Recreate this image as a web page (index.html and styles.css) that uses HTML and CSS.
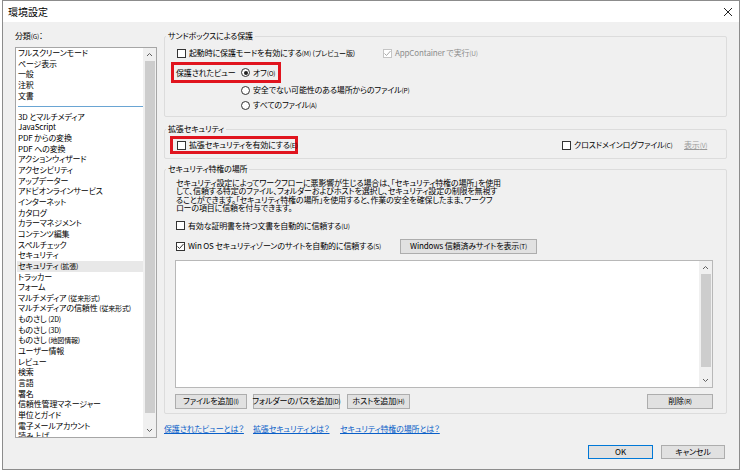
FILE: index.html
```html
<!DOCTYPE html>
<html lang="ja">
<head>
<meta charset="utf-8">
<title>環境設定</title>
<link rel="stylesheet" href="styles.css">
</head>
<body>
<div class="window">
  <div class="titlebar">
    <span class="title">環境設定</span>
    <svg class="close" width="10" height="10" viewBox="0 0 10 10"><path d="M1 1 L9 9 M9 1 L1 9" stroke="#222" stroke-width="1" fill="none"/></svg>
  </div>
  <div class="main">
    <div class="left">
      <div class="cat-label">分類<span class="mn">(G)</span>：</div>
      <div class="listbox">
        <div class="items">
          <div class="item">フルスクリーンモード</div>
          <div class="item">ページ表示</div>
          <div class="item">一般</div>
          <div class="item">注釈</div>
          <div class="item">文書</div>
          <div class="sep"></div>
          <div class="item">3D とマルチメディア</div>
          <div class="item">JavaScript</div>
          <div class="item">PDF からの変換</div>
          <div class="item">PDF への変換</div>
          <div class="item">アクションウィザード</div>
          <div class="item">アクセシビリティ</div>
          <div class="item">アップデーター</div>
          <div class="item">アドビオンラインサービス</div>
          <div class="item">インターネット</div>
          <div class="item">カタログ</div>
          <div class="item">カラーマネジメント</div>
          <div class="item">コンテンツ編集</div>
          <div class="item">スペルチェック</div>
          <div class="item">セキュリティ</div>
          <div class="item sel">セキュリティ <span class="paren">(拡張)</span></div>
          <div class="item">トラッカー</div>
          <div class="item">フォーム</div>
          <div class="item">マルチメディア <span class="paren">(従来形式)</span></div>
          <div class="item">マルチメディアの信頼性 <span class="paren">(従来形式)</span></div>
          <div class="item">ものさし <span class="paren">(2D)</span></div>
          <div class="item">ものさし <span class="paren">(3D)</span></div>
          <div class="item">ものさし <span class="paren">(地図情報)</span></div>
          <div class="item">ユーザー情報</div>
          <div class="item">レビュー</div>
          <div class="item">検索</div>
          <div class="item">言語</div>
          <div class="item">署名</div>
          <div class="item">信頼性管理マネージャー</div>
          <div class="item">単位とガイド</div>
          <div class="item">電子メールアカウント</div>
          <div class="item">読み上げ</div>
        </div>
        <div class="vscroll">
          <div class="arrow up"><svg width="7" height="5" viewBox="0 0 7 5"><polyline points="1,4 3.5,1.5 6,4" fill="none" stroke="#606060" stroke-width="1"/></svg></div>
          <div class="track"><div class="thumb list-thumb"></div></div>
          <div class="arrow down"><svg width="7" height="5" viewBox="0 0 7 5"><polyline points="1,1 3.5,3.5 6,1" fill="none" stroke="#606060" stroke-width="1"/></svg></div>
        </div>
      </div>
    </div>

    <div class="right">
      <fieldset class="group g1">
        <legend>サンドボックスによる保護</legend>
        <div class="gbody">
          <div class="row row1">
            <label class="opt opt1"><span class="cb"></span><span>起動時に保護モードを有効にする<span class="mn">(M)</span> <span class="paren">(プレビュー版)</span></span></label>
            <label class="opt disabled"><span class="cb cb-dis checked"><svg width="9" height="9" viewBox="0 0 9 9"><polyline points="1.5,4.5 3.5,6.5 7.5,2" fill="none" stroke="#a8a8a8" stroke-width="1"/></svg></span><span>AppContainer で実行<span class="mn">(U)</span></span></label>
          </div>
          <div class="redbox rb1">
            <span class="pv-label">保護されたビュー</span>
            <label class="opt"><span class="rb on"></span><span>オフ<span class="mn">(O)</span></span></label>
          </div>
          <div class="row row2 radio-row">
            <label class="opt"><span class="rb"></span><span>安全でない可能性のある場所からのファイル<span class="mn">(P)</span></span></label>
          </div>
          <div class="row row3 radio-row">
            <label class="opt"><span class="rb"></span><span>すべてのファイル<span class="mn">(A)</span></span></label>
          </div>
        </div>
      </fieldset>

      <fieldset class="group g2">
        <legend>拡張セキュリティ</legend>
        <div class="gbody">
          <div class="redbox rb2">
            <label class="opt"><span class="cb"></span><span>拡張セキュリティを有効にする<span class="mn">(E)</span></span></label>
          </div>
          <label class="opt cd"><span class="cb"></span><span>クロスドメインログファイル<span class="mn">(C)</span></span></label>
          <span class="view">表示<span class="mn">(V)</span></span>
        </div>
      </fieldset>

      <fieldset class="group g3">
        <legend>セキュリティ特権の場所</legend>
        <div class="gbody">
          <p class="desc">セキュリティ設定によってワークフローに悪影響が生じる場合は、「セキュリティ特権の場所」を使用<br>して、信頼する特定のファイル、フォルダーおよびホストを選択し、セキュリティ設定の制限を無視す<br>ることができます。「セキュリティ特権の場所」を使用すると、作業の安全を確保したまま、ワークフ<br>ローの項目に信頼を付与できます。</p>
          <div class="row cert-row">
            <label class="opt"><span class="cb"></span><span>有効な証明書を持つ文書を自動的に信頼する<span class="mn">(U)</span></span></label>
          </div>
          <div class="row win-row">
            <label class="opt win-opt"><span class="cb checked"><svg width="9" height="9" viewBox="0 0 9 9"><polyline points="1.5,4.5 3.5,6.5 7.5,2" fill="none" stroke="#333" stroke-width="1"/></svg></span><span>Win OS セキュリティゾーンのサイトを自動的に信頼する<span class="mn">(S)</span></span></label>
            <span class="btn btn-win">Windows 信頼済みサイトを表示<span class="mn">(T)</span></span>
          </div>
          <div class="locbox">
            <div class="loc-content"></div>
            <div class="vscroll">
              <div class="arrow up"><svg width="7" height="5" viewBox="0 0 7 5"><polyline points="1,4 3.5,1.5 6,4" fill="none" stroke="#606060" stroke-width="1"/></svg></div>
              <div class="track"><div class="thumb loc-thumb"></div></div>
              <div class="arrow down"><svg width="7" height="5" viewBox="0 0 7 5"><polyline points="1,1 3.5,3.5 6,1" fill="none" stroke="#606060" stroke-width="1"/></svg></div>
            </div>
          </div>
          <div class="row btn-row">
            <span class="btn b-file">ファイルを追加<span class="mn">(I)</span></span>
            <span class="btn b-folder">フォルダーのパスを追加<span class="mn">(D)</span></span>
            <span class="btn b-host">ホストを追加<span class="mn">(H)</span></span>
            <span class="btn b-del">削除<span class="mn">(R)</span></span>
          </div>
        </div>
      </fieldset>

      <div class="links">
        <span class="lk lk1"><a href="#">保護されたビューとは？</a></span>
        <span class="lk lk2"><a href="#">拡張セキュリティとは？</a></span>
        <span class="lk lk3"><a href="#">セキュリティ特権の場所とは？</a></span>
      </div>
    </div>
  </div>
  <div class="footer">
    <span class="btn b-ok">OK</span>
    <span class="btn b-cancel">キャンセル</span>
  </div>
</div>
</body>
</html>
```

FILE: styles.css
```css
* { box-sizing: border-box; }
html, body { margin: 0; padding: 0; }
body {
  background: #ffffff;
  font-family: "Noto Sans CJK JP", "Noto Sans", sans-serif;
  font-size: 8px;
  letter-spacing: -0.15px;
  color: #000;
  font-feature-settings: "palt";
}
.window {
  width: 738px;
  height: 470px;
  margin-left: 2px;
  border: 1px solid #8c8c8c;
  background: #f0f0f0;
  display: flex;
  flex-direction: column;
}
.titlebar {
  height: 21px;
  background: #fff;
  display: flex;
  align-items: center;
  justify-content: space-between;
  padding: 0 6px 0 5px;
  flex: none;
}
.title { font-size: 10px; line-height: 12px; letter-spacing: 0; }
.close { display: block; }

.mn { font-size: 6.5px; letter-spacing: -0.2px; }
.paren { font-size: 7px; }

.main {
  display: flex;
  gap: 7px;
  padding: 8px 12px 0 12px;
  flex: none;
}
.left { width: 142px; display: flex; flex-direction: column; flex: none; }
.cat-label { height: 12px; line-height: 12px; margin-bottom: 5px; }
.listbox {
  height: 391px;
  border: 1px solid #a6a6a6;
  background: #fff;
  display: flex;
  overflow: hidden;
}
.items { flex: 1; padding-left: 2px; overflow: hidden; min-width: 0; }
.item { height: 10.67px; line-height: 10.67px; white-space: nowrap; }
.item.sel { background: #e8e8e8; margin-left: -1px; padding-left: 1px; }
.sep { height: 10.4px; display: flex; align-items: center; }
.sep::before { content: ""; display: block; width: 100%; height: 1px; background: #6aa5d3; }

.vscroll {
  width: 13px;
  flex: none;
  background: #f0f0f0;
  display: flex;
  flex-direction: column;
}
.arrow { height: 13px; display: flex; align-items: center; justify-content: center; flex: none; }
.arrow svg { display: block; }
.track { flex: 1; display: flex; flex-direction: column; align-items: center; }
.thumb { width: 10px; background: #cdcdcd; }
.list-thumb { height: 352px; }

.right { width: 563px; display: flex; flex-direction: column; flex: none; }
fieldset.group {
  margin: 0;
  padding: 0;
  min-width: 0;
  border: 1px solid #dcdcdc;
  border-radius: 2px;
}
fieldset.g2 { margin-top: 6px; }
fieldset.g3 { margin-top: 4px; }
legend {
  padding: 0 2px;
  margin-left: 1px;
  height: 12px;
  line-height: 12px;
}
.row { display: flex; align-items: center; height: 12px; }
.opt { display: flex; align-items: center; white-space: nowrap; line-height: 12px; }
.cb {
  width: 9px; height: 9px;
  border: 1px solid #333;
  background: #fff;
  margin-right: 3px;
  flex: none;
  display: flex; align-items: center; justify-content: center;
}
.cb svg { display: block; margin: -1px; }
.cb-dis { border-color: #c4c4c4; }
.rb {
  width: 9px; height: 9px;
  border: 1px solid #333;
  border-radius: 50%;
  background: #fff;
  margin-right: 3px;
  flex: none;
  display: flex; align-items: center; justify-content: center;
}
.rb.on::after {
  content: ""; display: block;
  width: 4px; height: 4px; border-radius: 50%;
  background: #222;
}
.disabled { color: #8d8d8d; }

.g1 .gbody { padding: 5px 0 5px 0; }
.row1 { padding-left: 12px; }
.opt1 { width: 206px; }
.redbox {
  display: flex;
  align-items: center;
  border: 3px solid #e0141e;
}
.rb1 { height: 21px; width: 110px; margin: 3px 0 0 6px; padding-left: 2px; }
.pv-label { width: 65px; flex: none; line-height: 12px; white-space: nowrap; }
.row2 { margin-top: 1px; }
.row3 { margin-top: 3px; }
.radio-row { padding-left: 76px; }

.g2 .gbody { display: flex; align-items: center; padding: 1px 12px 4px 0; }
.rb2 { height: 18px; width: 128px; margin-left: 5px; padding-left: 4px; }
.cd { margin-left: auto; width: 122px; }
.view { width: 30px; color: #9a9a9a; text-decoration: underline; line-height: 12px; white-space: nowrap; }

.g3 .gbody { padding: 4px 12px 4px 11px; display: flex; flex-direction: column; }
.desc { margin: 0; line-height: 8.4px; white-space: nowrap; }
.cert-row { margin-top: 7px; }
.win-row { margin-top: 7px; height: 15px; }
.win-opt { width: 224px; }
.btn {
  display: inline-flex;
  align-items: center;
  justify-content: center;
  background: #e1e1e1;
  border: 1px solid #adadad;
  white-space: nowrap;
  line-height: 12px;
  flex: none;
}
.btn-win { width: 137px; height: 15px; }
.locbox {
  margin: 6px 0 0 -1px;
  width: 538px;
  height: 128px;
  border: 1px solid #b8b8b8;
  background: #fff;
  display: flex;
}
.loc-content { flex: 1; }
.loc-thumb { height: 93px; }
.btn-row { margin: 6px 0 0 -1px; height: 15px; }
.btn-row .btn { height: 15px; }
.b-file { width: 72px; }
.b-folder { width: 87px; margin-left: 6px; }
.b-host { width: 63px; margin-left: 7px; }
.b-del { width: 66px; margin-left: auto; margin-right: 1px; }

.links { display: flex; margin-top: 9px; height: 12px; line-height: 12px; }
.lk { white-space: nowrap; }
.lk1 { width: 89px; }
.lk2 { width: 87px; }
.lk a { color: #0a5fc8; text-decoration: underline; }

.footer {
  display: flex;
  justify-content: flex-end;
  gap: 8px;
  padding: 7px 14px 0 0;
}
.b-ok { width: 65px; height: 14px; border-color: #0078d7; }
.b-cancel { width: 64px; height: 14px; }
```
